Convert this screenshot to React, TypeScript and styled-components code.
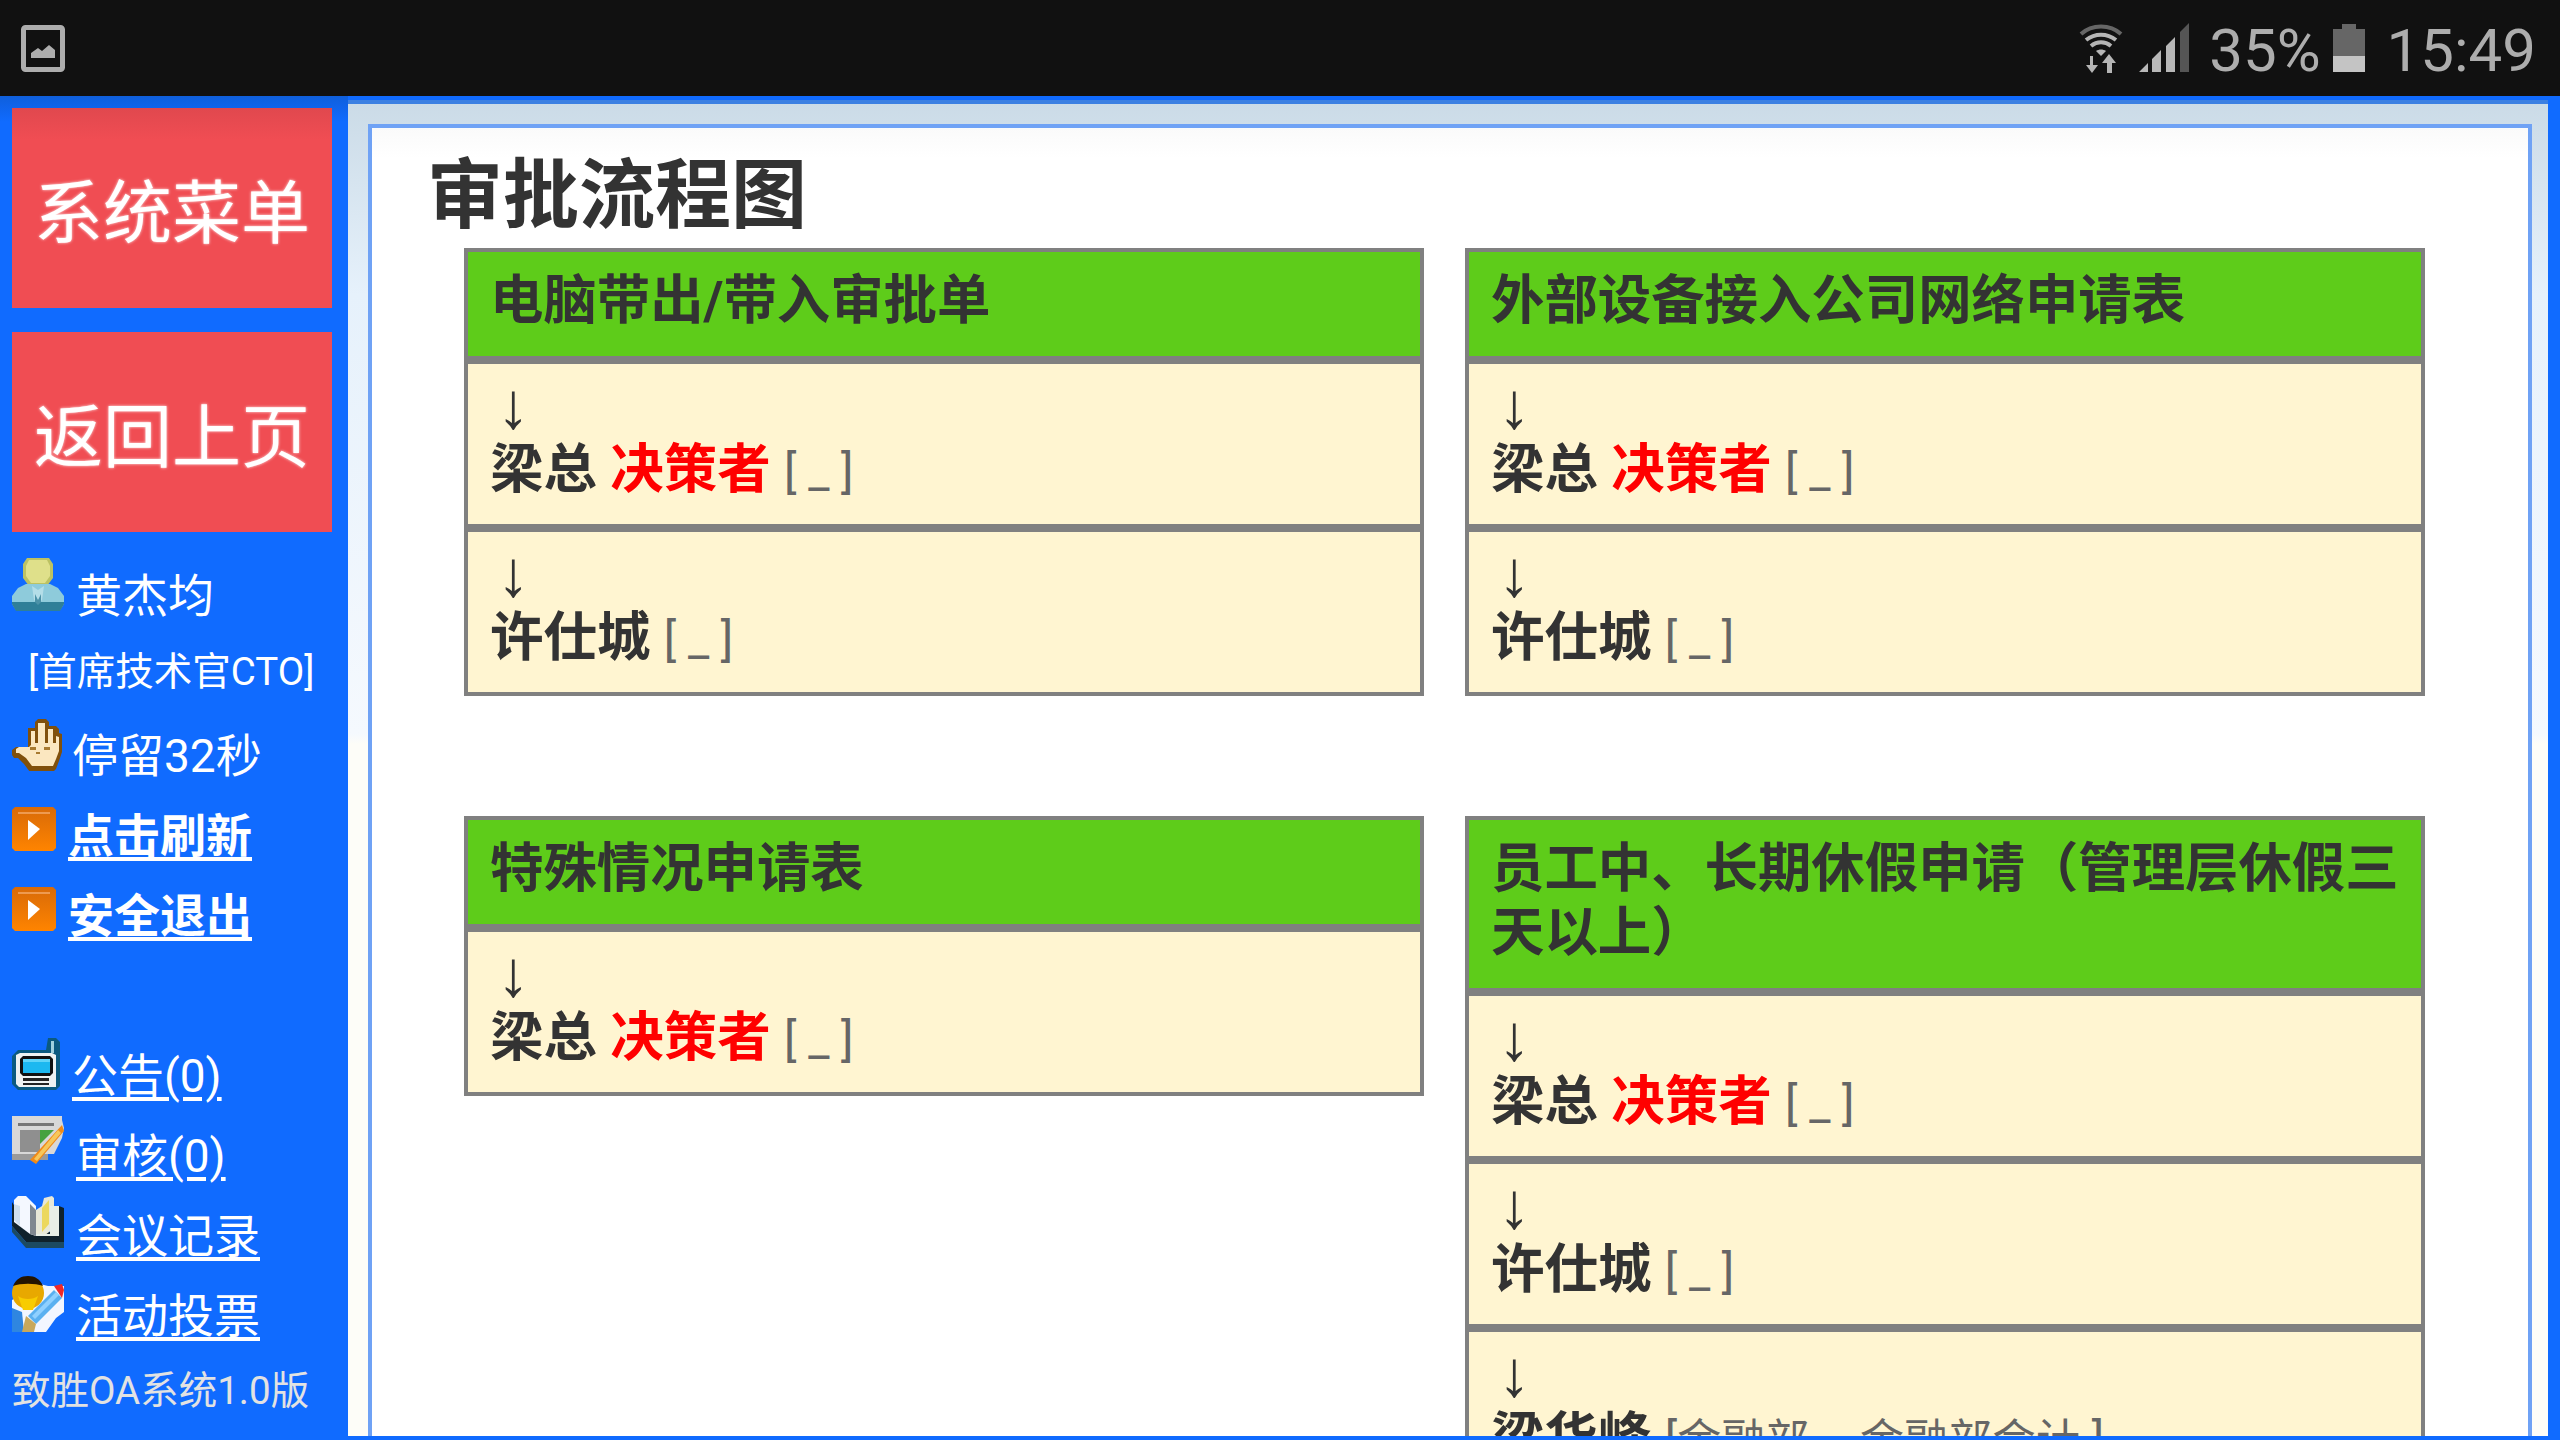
import React from 'react';
import styled, { createGlobalStyle } from 'styled-components';

const GlobalStyle = createGlobalStyle`
  html, body {
    margin: 0;
    padding: 0;
    background: #106bff;
    overflow: hidden;
  }
  * {
    box-sizing: border-box;
  }
`;

const Screen = styled.div`
  width: 2560px;
  height: 1440px;
  display: flex;
  flex-direction: column;
  overflow: hidden;
  font-family: Roboto, "Noto Sans CJK SC", sans-serif;
`;

const StatusBar = styled.div`
  height: 96px;
  flex: none;
  background: #111;
  display: flex;
  align-items: center;
  padding: 0 24px 0 21px;
  color: #adadad;
  font-size: 60px;
`;

const StatusRight = styled.div`
  margin-left: auto;
  display: flex;
  align-items: center;
`;

const StatusText = styled.span<{ $left: number }>`
  margin-left: ${({ $left }) => $left}px;
  line-height: 96px;
  margin-top: 5px;
`;

const Body = styled.div`
  flex: 1;
  min-height: 0;
  display: flex;
`;

const Sidebar = styled.aside`
  width: 348px;
  flex: none;
  padding: 12px 0 0 12px;
  display: flex;
  flex-direction: column;
  color: #fff;
  background: linear-gradient(#0f5fdc 0, #106bff 26px);
`;

const RedButton = styled.div`
  width: 320px;
  height: 200px;
  flex: none;
  margin-bottom: 24px;
  background: #f04d53;
  color: #fff;
  font-size: 69px;
  text-shadow: 0 0 3px rgba(255, 255, 255, 0.9);
  display: flex;
  align-items: center;
  justify-content: center;
  &:first-child {
    background: linear-gradient(#e0484e 0, #f04d53 32px);
  }
`;

const SideRow = styled.div<{ $top?: number }>`
  height: 80px;
  flex: none;
  margin-top: ${({ $top }) => $top || 0}px;
  display: flex;
  align-items: flex-start;
  font-size: 46px;
  line-height: 64px;
`;

const IconSlot = styled.svg<{ $w: number; $h: number; $y?: number }>`
  width: ${({ $w }) => $w}px;
  height: ${({ $h }) => $h}px;
  flex: none;
  margin-top: ${({ $y }) => $y || 0}px;
`;

const RowLabel = styled.span<{ $left: number; $y?: number }>`
  margin-left: ${({ $left }) => $left}px;
  margin-top: ${({ $y }) => $y || 0}px;
  white-space: nowrap;
`;

const RoleLine = styled.div`
  height: 80px;
  flex: none;
  padding-left: 16px;
  font-size: 38.5px;
  line-height: 72px;
  white-space: nowrap;
`;

const SideLink = styled.a<{ $strong?: boolean; $left: number; $y?: number }>`
  margin-left: ${({ $left }) => $left}px;
  margin-top: ${({ $y }) => $y || 0}px;
  color: #fff;
  text-decoration: underline;
  text-decoration-thickness: 4px;
  text-underline-offset: 5px;
  font-weight: ${({ $strong }) => ($strong ? 700 : 400)};
  white-space: nowrap;
`;

const Version = styled.div`
  margin-top: 3px;
  font-size: 38.5px;
  line-height: 64px;
  color: #e2e2e2;
  white-space: nowrap;
`;

const Frame = styled.main`
  flex: 1;
  min-width: 0;
  margin: 4px 12px 4px 0;
  border-top: 4px solid #3c80e2;
  padding: 20px 16px 0 20px;
  background: linear-gradient(#cbdbe7 0, #e6f1fb 190px, #f5f9fe 630px, #fdfdf8 640px);
  overflow: hidden;
`;

const Panel = styled.section`
  height: 100%;
  border: 4px solid #6fa2f5;
  border-bottom: 0;
  padding: 0 104px 0 92px;
  overflow: hidden;
  background: linear-gradient(#fafafa 0, #fff 30px);
`;

const Title = styled.h1`
  margin: 0 0 0 -37px;
  height: 120px;
  padding-top: 12px;
  font-size: 76px;
  line-height: 112px;
  font-weight: 700;
  color: #333;
`;

const Grid = styled.div`
  display: grid;
  grid-template-columns: 960px 960px;
  column-gap: 41px;
  row-gap: 120px;
  align-items: start;
`;

const Card = styled.div`
  border: 4px solid #808080;
  background: #808080;
  display: flex;
  flex-direction: column;
  gap: 8px;
`;

const CardHead = styled.div`
  background: #5ecc1a;
  color: #333;
  font-size: 53.4px;
  font-weight: 700;
  line-height: 64px;
  padding: 17px 16px 23px 22px;
`;

const Step = styled.div`
  height: 160px;
  background: #fff5d1;
  padding: 10px 0 0 22px;
  color: #333;
`;

const Arrow = styled.div`
  height: 64px;
  padding-left: 7px;
  font-family: "Liberation Sans", sans-serif;
  font-size: 65px;
  line-height: 64px;
`;

const Person = styled.div`
  font-size: 53.5px;
  line-height: 64px;
  font-weight: 700;
  white-space: nowrap;
`;

const Decider = styled.span`
  color: #f00;
`;

const Sign = styled.span`
  font-size: 47px;
  font-weight: 400;
  color: #666;
`;

const Dept = styled.span`
  font-size: 44px;
`;

const PictureIcon = () => (
  <IconSlot $w={44} $h={47} viewBox="0 0 44 47">
    <rect x="2.5" y="2.5" width="39" height="42" rx="2" fill="none" stroke="#adadad" strokeWidth="5" />
    <path d="M10 33v-5l7-5 4 3 7-6 6 5v8z" fill="#adadad" />
  </IconSlot>
);

const WifiIcon = () => (
  <IconSlot $w={44} $h={50} viewBox="0 0 44 50">
    <path d="M2 11C13 1 31 1 42 11" fill="none" stroke="#666" strokeWidth="4" />
    <path d="M7 17c9-7 21-7 30 0M12 23c6-5 14-5 20 0" fill="none" stroke="#b5b5b5" strokeWidth="4" />
    <path d="M17 28c3-2 7-2 10 0l-5 5z" fill="#b5b5b5" />
    <path d="M11 33h3v9h5l-6 8-6-8h4zM30 31l7 9h-4v10h-5V40h-5z" fill="#b5b5b5" />
  </IconSlot>
);

const SignalIcon = () => (
  <IconSlot $w={50} $h={50} viewBox="0 0 50 50">
    <path d="M0 49l9-9v9zM13 49V36l9-9v22zM27 49V23l9-9v35z" fill="#b8b8b8" />
    <path d="M41 49V9l9-9v49z" fill="#555" />
  </IconSlot>
);

const BatteryIcon = () => (
  <IconSlot $w={32} $h={48} viewBox="0 0 32 48">
    <path d="M9 0h14v5h9v27H0V5h9z" fill="#666" />
    <rect y="32" width="32" height="16" fill="#c4c4c4" />
  </IconSlot>
);

const UserIcon = () => (
  <IconSlot $w={52} $h={56} viewBox="0 0 52 56">
    <path d="M15 2h22l4 6v14l-6 8H17l-6-8V8z" fill="#bcc263" />
    <path d="M17 4h18l3 6v10l-5 7H19l-5-7V10z" fill="#dfe08a" />
    <path d="M14 28h24l8 4 6 8v8l-4 6H4l-4-6v-8l6-8z" fill="#8ecbdb" />
    <path d="M0 46h52v2l-4 7H4l-4-7z" fill="#2f7f98" />
    <path d="M20 30l6 4 6-4-2 14-4 4-4-4z" fill="#b4dee8" />
    <path d="M23 38l3 6 3-6v8l-3 3-3-3z" fill="#4c92a8" />
  </IconSlot>
);

const HandIcon = () => (
  <IconSlot $w={50} $h={52} $y={3} viewBox="0 0 50 52">
    <path d="M16 22V9h7V3l3-3h8l3 3v4h7l3 3v4l3 1v18l-3 9-3 8-3 3H18l-6-8-6-6H2l-2-3v-5l4-3h12z" fill="#80500c" />
    <path d="M19 26V12h4v12h3V4h7v20h3V10h5v14h3V17l3 1v14l-3 8-3 7H20l-6-8-7-5H4v-4l3-2h10z" fill="#fbe7c0" />
    <path d="M18 28h6v3h-6zM32 28h6v3h-6zM24 33h4v2h-4z" fill="#a87a30" />
  </IconSlot>
);

const PlayIcon = () => (
  <IconSlot $w={44} $h={44} $y={11} viewBox="0 0 44 44">
    <defs>
      <linearGradient id="playFill" x1="0" y1="0" x2="0" y2="1">
        <stop offset="0" stopColor="#d86a08" />
        <stop offset="1" stopColor="#ff8400" />
      </linearGradient>
    </defs>
    <path d="M3 0h38l3 3v38l-3 3H3l-3-3V3z" fill="url(#playFill)" />
    <rect x="6" y="5" width="32" height="2" fill="#ee9a50" />
    <path d="M16 13l12 9-12 11z" fill="#fff" />
  </IconSlot>
);

const RadioIcon = () => (
  <IconSlot $w={48} $h={52} $y={2} viewBox="0 0 48 52">
    <path d="M36 0h8l4 4v44l-4 4H6l-6-6V18l6-6h28z" fill="#0b5a80" />
    <path d="M4 17l4-2h32l4 2v32H7l-3-3z" fill="#eef2f2" />
    <path d="M8 21l3-3h27l3 3v14l-3 3H11l-3-3z" fill="#111" />
    <path d="M11 21h27v14H11z" fill="#1cb8f0" />
    <path d="M11 21h27v3H11z" fill="#5fd4f8" />
    <path d="M11 40h26v3H11zM11 45h26v2H11z" fill="#222" />
    <path d="M39 3h3v12h-3z" fill="#9fd0de" />
  </IconSlot>
);

const FormIcon = () => (
  <IconSlot $w={52} $h={48} viewBox="0 0 52 48">
    <path d="M0 0h50v4l2 8-2 10-8 16H0z" fill="#d8d8d8" />
    <path d="M6 7h36v3H6z" fill="#777" />
    <path d="M8 14h20v22H8z" fill="#8f8f8f" />
    <path d="M28 14h14l-14 14z" fill="#45a23f" />
    <path d="M0 38h36v6H0z" fill="#9a9a9a" />
    <path d="M50 9l2 6-28 33-6-4z" fill="#f08a18" />
    <path d="M46 14l3 3-24 28-3-2z" fill="#f7c75a" />
  </IconSlot>
);

const BookIcon = () => (
  <IconSlot $w={52} $h={52} viewBox="0 0 52 52">
    <path d="M0 6v24l14 16h33l5 6V12l-5-2v26H18z" fill="#10222c" />
    <path d="M0 30l14 16h38v6H14L0 36z" fill="#1c4a62" />
    <path d="M2 4l4-4h8l4 4 6 6v30l-6-2L2 26z" fill="#f4f8ff" />
    <path d="M2 8l6 2v20l-6-6z" fill="#cfe0f0" />
    <path d="M18 8l6 6v26l-6-2z" fill="#808890" />
    <path d="M24 14l6-4 2-8 8-2 2 2v30l-10 8h-8z" fill="#e8e8d8" />
    <path d="M30 12l7-8v24l-7 8z" fill="#ecd85e" />
    <path d="M38 10h9v30H24v-2h14z" fill="#e8eee6" />
  </IconSlot>
);

const VoteIcon = () => (
  <IconSlot $w={52} $h={56} viewBox="0 0 52 56">
    <path d="M28 8l8 2 16 0v26l-8 6-10 14H10L0 40V24z" fill="#f2f6ff" />
    <circle cx="16" cy="17" r="16" fill="#e8a800" />
    <path d="M1 10C4 3 9 0 16 0s12 3 15 10c-8-3-22-3-30 0z" fill="#241400" />
    <path d="M6 20c5 4 15 4 20 0l-5 14h-10z" fill="#f8cc00" />
    <path d="M42 14l8 8-26 26-8-8z" fill="#5ab0f0" />
    <path d="M44 16l3 3-24 24-3-3z" fill="#8fd0ff" />
    <path d="M42 10l8-2 2 6-2 8z" fill="#f02828" />
    <path d="M0 32l10 4 2 20H0z" fill="#2f86e0" />
    <path d="M14 40l10 8-2 8H10z" fill="#c9a85a" />
  </IconSlot>
);

interface Approver {
  name: string;
  decider?: boolean;
  dept?: string;
}

interface Flow {
  title: string;
  steps: Approver[];
}

const flows: Flow[] = [
  {
    title: '电脑带出/带入审批单',
    steps: [{ name: '梁总', decider: true }, { name: '许仕城' }],
  },
  {
    title: '外部设备接入公司网络申请表',
    steps: [{ name: '梁总', decider: true }, { name: '许仕城' }],
  },
  {
    title: '特殊情况申请表',
    steps: [{ name: '梁总', decider: true }],
  },
  {
    title: '员工中、长期休假申请（管理层休假三天以上）',
    steps: [
      { name: '梁总', decider: true },
      { name: '许仕城' },
      { name: '梁华峰', dept: '金融部 – 金融部会计' },
    ],
  },
];

export default function App() {
  return (
    <Screen>
      <GlobalStyle />
      <StatusBar>
        <PictureIcon />
        <StatusRight>
          <WifiIcon />
          <IconSlot as="span" $w={16} $h={1} />
          <SignalIcon />
          <StatusText $left={20}>35%</StatusText>
          <IconSlot as="span" $w={12} $h={1} />
          <BatteryIcon />
          <StatusText $left={22}>15:49</StatusText>
        </StatusRight>
      </StatusBar>
      <Body>
        <Sidebar>
          <RedButton>系统菜单</RedButton>
          <RedButton>返回上页</RedButton>
          <SideRow>
            <UserIcon />
            <RowLabel $left={12} $y={8}>黄杰均</RowLabel>
          </SideRow>
          <RoleLine>[首席技术官CTO]</RoleLine>
          <SideRow>
            <HandIcon />
            <RowLabel $left={10} $y={8}>停留32秒</RowLabel>
          </SideRow>
          <SideRow>
            <PlayIcon />
            <SideLink href="#" $strong $left={12} $y={8}>点击刷新</SideLink>
          </SideRow>
          <SideRow>
            <PlayIcon />
            <SideLink href="#" $strong $left={12} $y={8}>安全退出</SideLink>
          </SideRow>
          <SideRow $top={80}>
            <RadioIcon />
            <SideLink href="#" $left={12} $y={8}>公告(0)</SideLink>
          </SideRow>
          <SideRow>
            <FormIcon />
            <SideLink href="#" $left={12} $y={8}>审核(0)</SideLink>
          </SideRow>
          <SideRow>
            <BookIcon />
            <SideLink href="#" $left={12} $y={8}>会议记录</SideLink>
          </SideRow>
          <SideRow>
            <VoteIcon />
            <SideLink href="#" $left={12} $y={8}>活动投票</SideLink>
          </SideRow>
          <Version>致胜OA系统1.0版</Version>
        </Sidebar>
        <Frame>
          <Panel>
            <Title>审批流程图</Title>
            <Grid>
              {flows.map((flow) => (
                <Card key={flow.title}>
                  <CardHead>{flow.title}</CardHead>
                  {flow.steps.map((step, i) => (
                    <Step key={i}>
                      <Arrow>↓</Arrow>
                      <Person>
                        {step.name}{' '}
                        {step.decider && <Decider>决策者 </Decider>}
                        <Sign>[{step.dept ? <Dept>{step.dept}</Dept> : ' _'} ]</Sign>
                      </Person>
                    </Step>
                  ))}
                </Card>
              ))}
            </Grid>
          </Panel>
        </Frame>
      </Body>
    </Screen>
  );
}
